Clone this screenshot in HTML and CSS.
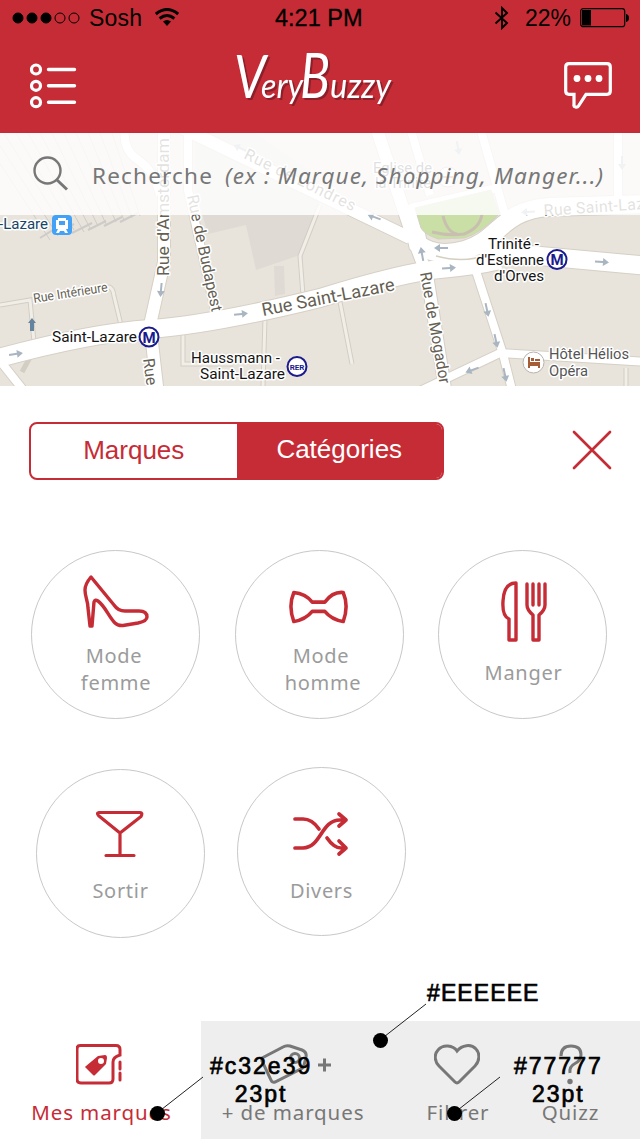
FILE: index.html
```html
<!DOCTYPE html>
<html lang="fr">
<head>
<meta charset="utf-8">
<title>Very Buzzy</title>
<link rel="stylesheet" href="styles.css">
</head>
<body>
<div class="app">
  <header class="header">
    <div class="status">
      <svg class="signal" width="68" height="14" viewBox="0 0 68 14"><g stroke="#000"><circle cx="6" cy="7" r="5"/><circle cx="20" cy="7" r="5"/><circle cx="34" cy="7" r="5"/><circle cx="48" cy="7" r="5" fill="none"/><circle cx="62" cy="7" r="5" fill="none"/></g></svg>
      <span class="carrier">Sosh</span>
      <svg class="wifi" width="24" height="18" viewBox="0 0 24 18"><g fill="none" stroke="#000" stroke-width="3"><path d="M.8 6Q12-3 23.200 6"/><path d="M4.600 10.500Q12 4.500 19.400 10.500"/></g><path d="M8 13.500Q12 10.300 16 13.500L12 18Z"/></svg>
      <span class="time">4:21 PM</span>
      <svg class="bluetooth" width="16" height="24" viewBox="0 0 16 24"><path d="M1.500 6.500 13 17 8 22V2l5 5L1.500 17.500" fill="none" stroke="#000" stroke-width="1.900"/></svg>
      <span class="percent">22%</span>
      <svg class="battery" width="49" height="20" viewBox="0 0 49 20"><rect x=".7" y=".7" width="44" height="18" rx="2.500" fill="none" stroke="#000" stroke-width="1.200"/><path d="M2 2h9v15.500H2zM46 6q3 .5 3 4t-3 4z"/></svg>
    </div>
    <div class="titlebar">
      <svg class="menu-icon" width="47" height="46" viewBox="0 0 47 46" fill="none" stroke="#fff"><g stroke-width="3.200"><circle cx="6" cy="6.500" r="4.500"/><circle cx="6" cy="22.800" r="4.500"/><circle cx="6" cy="39.200" r="4.500"/></g><path d="M18.500 6.500h26M18.500 22.800h26M18.500 39.200h26" stroke-width="3.400" stroke-linecap="round"/></svg>
      <svg class="logo" width="162" height="70" viewBox="0 0 162 70"><g class="logo-text"><text x="2" y="48" font-size="60" textLength="32" lengthAdjust="spacingAndGlyphs">V</text><text x="29" y="48" font-size="35" textLength="42" lengthAdjust="spacingAndGlyphs">ery</text><text x="68" y="48" font-size="62" textLength="30" lengthAdjust="spacingAndGlyphs">B</text><text x="98" y="48" font-size="35" textLength="61" lengthAdjust="spacingAndGlyphs">uzzy</text></g></svg>
      <svg class="chat-icon" width="48" height="47" viewBox="0 0 48 47"><path d="M5 1.700h38q3.300 0 3.300 3.300v24q0 3.300-3.300 3.300H22L14.500 44q-1 1.500-3 1T10 42.500V32.300H5q-3.300 0-3.300-3.300V5Q1.700 1.700 5 1.700Z" fill="none" stroke="#fff" stroke-width="3.200"/><g fill="#fff"><circle cx="13" cy="16.500" r="3.400"/><circle cx="24" cy="16.500" r="3.400"/><circle cx="35" cy="16.500" r="3.400"/></g></svg>
    </div>
  </header>

  <section class="map">
    <svg class="map-canvas" width="640" height="253" viewBox="0 133 640 253">
      <defs>
        <g id="arrow"><path d="M-7-1H1v-3l6 4-6 4V1h-8z" fill="#a9b5c1"/></g>
      </defs>
      <rect y="133" width="640" height="253" fill="#e8e4dc"/>
      <path d="M195 133h60l65 45v22l-20 55-44 15-10-45-38 9-13-44z" fill="#dfdad4"/>
      <path d="M274 266h10l1 28-10 2z" fill="#dfdad4"/>
      <g class="rails"><path d="M-20 133 50 240M-8 133 58 236M4 133 66 232M16 133 74 230M28 133 84 232M40 133 90 228M52 133 98 226M64 133 106 224M76 133 116 222M88 133 124 220M100 133 132 218M112 133 140 216"/><path d="M40 238l16-10M56 233l18-9M72 233l20-10M88 230l18-9M104 226l18-9M120 222l18-9" stroke-width="2"/></g>
      <g class="lane-edge"><path d="M0 305 30 300 34 342M95 291 109 287Q113 288 114 296L121 325M340 302 352 364M320 205 300 256 303 295M183 335v29h50M265 318 263 386M22 372 34 350M626 386V368"/></g>
      <g class="lane"><path d="M0 305 30 300 34 342M95 291 109 287Q113 288 114 296L121 325M340 302 352 364M320 205 300 256 303 295M183 335v29h50M265 318 263 386M626 386V368"/></g>
      <g class="road-edge">
        <path stroke-width="20" d="M-5 359Q90 333 150 329T320 298Q405 272 440 269T500 260"/>
        <path stroke-width="20" d="M410 205 418 244Q435 258 465 250C500 240 500 210 550 207L650 204M480 250 540 256 650 266"/>
        <path stroke-width="14" d="M180 127 410 238M164 125V262L150 325 158 395M376 127 412 235 427 275 446 395"/>
        <path stroke-width="10" d="M188 125V190L216 315M480 127 505 215M618 127V200M410 208 497 188M475 268 503 354 512 390M650 362 500 353 420 391M410 127 430 195M125 127Q122 150 138 160T160 195M-3 357 24 391"/>
      </g>
      <g class="road">
        <path stroke-width="18" d="M-5 359Q90 333 150 329T320 298Q405 272 440 269T500 260"/>
        <path stroke-width="18" d="M410 205 418 244Q435 258 465 250C500 240 500 210 550 207L650 204M480 250 540 256 650 266"/>
        <path stroke-width="12" d="M180 127 410 238M164 125V262L150 325 158 395M376 127 412 235 427 275 446 395"/>
        <path stroke-width="8" d="M188 125V190L216 315M480 127 505 215M618 127V200M410 208 497 188M475 268 503 354 512 390M650 362 500 353 420 391M410 127 430 195M125 127Q122 150 138 160T160 195M-3 357 24 391"/>
      </g>
      <path d="M415 208 491 190 499 214Q480 234 464 238L438 239Q424 234 421 228Z" fill="#c9dfa6" stroke="#d5cfc0"/>
      <path d="M432 232q16 4 32 2 16-6 18-20M443 216q4 16 14 18" fill="none" stroke="#c9bfb0" stroke-width="3"/>
      <path d="M436 256q30 8 52-2" fill="none" stroke="#d5cfc0" stroke-width="1.500"/>
      <use href="#arrow" transform="translate(16 354) rotate(-8)"/>
      <use href="#arrow" transform="translate(161 290) rotate(95)"/>
      <use href="#arrow" transform="translate(241 314) rotate(-6)"/>
      <use href="#arrow" transform="translate(449 268) rotate(-5)"/>
      <use href="#arrow" transform="translate(602 262) rotate(4)"/>
      <use href="#arrow" transform="translate(487 310) rotate(78)"/>
      <use href="#arrow" transform="translate(496 341) rotate(78)"/>
      <use href="#arrow" transform="translate(505 375) rotate(78)"/>
      <use href="#arrow" transform="translate(472 370) rotate(160)"/>
      <use href="#arrow" transform="translate(441 248) rotate(180)"/>
      <use href="#arrow" transform="translate(374 217) rotate(200)"/>
      <use href="#arrow" transform="translate(422 254) rotate(-100)"/>
      <use href="#arrow" transform="translate(240 148) rotate(205)"/>
      <use href="#arrow" transform="translate(528 212) rotate(175)"/>
      <use href="#arrow" transform="translate(458 148) rotate(80)"/>
      <use href="#arrow" transform="translate(622 163) rotate(90)"/>
      <path d="M30 331v-8h-2l4-5 4 5h-2v8z" fill="#65839c"/>
      <g class="street" font-size="16">
        <text transform="translate(169 276) rotate(-90)" textLength="138" lengthAdjust="spacingAndGlyphs" font-size="17">Rue d'Amsterdam</text>
        <text transform="translate(187 196) rotate(78)" textLength="119" lengthAdjust="spacingAndGlyphs">Rue de Budapest</text>
        <text transform="translate(243 158) rotate(26)" textLength="122">Rue de Londres</text>
        <text transform="translate(263 316) rotate(-11)" textLength="135" lengthAdjust="spacingAndGlyphs" font-size="18">Rue Saint-Lazare</text>
        <text transform="translate(420 273) rotate(80)" textLength="113" lengthAdjust="spacingAndGlyphs">Rue de Mogador</text>
        <text transform="translate(143 359) rotate(82)">Rue</text>
        <text transform="translate(34 303) rotate(-9)" textLength="75" lengthAdjust="spacingAndGlyphs" font-size="13">Rue Intérieure</text>
        <text transform="translate(544 216) rotate(-4)" textLength="124" font-size="16">Rue Saint-Lazare</text>
      </g>
      <g class="place" font-size="15.500">
        <text x="-1" y="229" textLength="49" lengthAdjust="spacingAndGlyphs" fill="#174568">-Lazare</text>
        <text x="52" y="342" textLength="85" lengthAdjust="spacingAndGlyphs">Saint-Lazare</text>
        <text x="191" y="363" textLength="89" lengthAdjust="spacingAndGlyphs">Haussmann -</text>
        <text x="200" y="379" textLength="85" lengthAdjust="spacingAndGlyphs">Saint-Lazare</text>
        <text x="488" y="249" textLength="51" lengthAdjust="spacingAndGlyphs">Trinité -</text>
        <text x="476" y="265" textLength="68" lengthAdjust="spacingAndGlyphs">d'Estienne</text>
        <text x="494" y="281" textLength="50" lengthAdjust="spacingAndGlyphs">d'Orves</text>
        <g fill="#555"><text x="549" y="359" textLength="80" lengthAdjust="spacingAndGlyphs">Hôtel Hélios</text><text x="549" y="376" textLength="39" lengthAdjust="spacingAndGlyphs">Opéra</text><text x="373" y="173" textLength="59" lengthAdjust="spacingAndGlyphs">Eglise de</text><text x="375" y="188" textLength="56" lengthAdjust="spacingAndGlyphs">la Trinité</text></g>
      </g>
      <rect x="52" y="215" width="20" height="20" rx="4" fill="#43a2f5"/><path d="M58 218h8v2h2v9h-2l2 4h-3l-1-2h-4l-1 2h-3l2-4h-2v-9h2z" fill="#fff"/><path d="M59 221h6v4h-6z" fill="#43a2f5"/>
      <g class="badge"><circle cx="149" cy="337" r="9.500"/><text x="149" y="342.500" font-size="15">M</text><circle cx="557" cy="259.500" r="9.500"/><text x="557" y="265" font-size="15">M</text><circle cx="297" cy="366.500" r="9.500"/><text x="297" y="369.500" font-size="8">RER</text></g>
      <circle cx="533.500" cy="362.500" r="10.500" fill="#fff" stroke="#b9b4ad"/><path d="M528 357h2v5h10v6h-2v-2h-8v2h-2zM531 358h3v3h-3zM535 359h5v2h-5z" fill="#a55d38"/>
      <circle cx="448" cy="177" r="10" fill="#fff" stroke="#b9b4ad"/><path d="M443 177h10M448 171v11" stroke="#bd7550" stroke-width="2"/>
    </svg>
    <div class="search">
      <svg class="search-icon" width="36" height="36" viewBox="0 0 36 36" fill="none" stroke="#777" stroke-width="2.400"><circle cx="14.500" cy="14.500" r="13"/><path d="M23.500 23.500 34 33.500" stroke-width="3"/></svg>
      <span class="search-label">Recherche</span>
      <span class="search-hint">(ex : Marque, Shopping, Manger...)</span>
    </div>
  </section>

  <div class="filters">
    <div class="segmented"><span class="segment">Marques</span><span class="segment segment-active">Catégories</span></div>
    <svg class="close" width="40" height="40" viewBox="0 0 40 40"><path d="M2 2 38 38M38 2 2 38" stroke="#c62c36" stroke-width="2.700" stroke-linecap="round"/></svg>
  </div>

  <main class="categories">
    <div class="row row-first">
      <div class="category">
        <svg width="66" height="54" viewBox="0 0 66 54"><path d="M8 2Q2 9 2 15c0 7 3 11 3 18l2 18h2l2-24q1-3 4-1C22 31 26 42 32 48q3 3 8 2.500L55 48q9-2 9-6 0-6-8-6H42q-7 0-11-6Z"/></svg>
        <span class="name femme"><span class="word-first">Mode</span><br>femme</span>
      </div>
      <div class="category">
        <svg width="60" height="36" viewBox="0 0 62 36"><path d="M5 3Q-1 17 5 33 17 31 24 22.500H37Q44 31 56 33 62 17 56 3 45 2 37 13H24Q17 4 5 3Z" stroke-width="3.700"/></svg>
        <span class="name homme"><span class="word-first">Mode</span><br>homme</span>
      </div>
      <div class="category category-food">
        <svg width="48" height="62" viewBox="0 0 48 62"><path d="M16 2v57H9V38q-7-3-6-18Q4 2 16 2ZM27 3v21q0 5 6 10v25h6V34q6-5 6-10V3M33 3v21M39 3v21"/></svg>
        <span class="name manger">Manger</span>
      </div>
    </div>
    <div class="row row-second">
      <div class="category category-drink">
        <svg width="48" height="48" viewBox="0 0 48 48"><path d="M3 2.500h41q3 0 1 4L24 23 3 6q-3-3 0-3.500ZM24 23v22M10 45.500h28" stroke-width="3.200"/></svg>
        <span class="name sortir">Sortir</span>
      </div>
      <div class="category category-misc">
        <svg width="56" height="46" viewBox="0 0 56 46"><path d="M2 8h8q9 0 16 10M2 37h8C28 37 28 9 47 9h6M34 27q7 10 14 10h5M46 3l7 6-7 6M46 30l7 7-7 6" stroke-width="3.700"/></svg>
        <span class="name divers">Divers</span>
      </div>
    </div>
  </main>

  <nav class="tabs">
    <div class="tab tab-active">
      <svg width="46" height="42" viewBox="0 0 46 42" fill="none" stroke="#c62c36" stroke-width="3"><path d="M4 1.500h36q4 0 4 4V11q-7 2-7 7v17q0 4-4 4H5q-4 0-4-4V5q0-3.500 3-3.500Z"/><path d="M44 18v7M44 29v7" stroke-linecap="round"/><path fill="#c62c36" stroke="none" fill-rule="evenodd" d="M10 22 22 12l7-1q2 0 2 3l-1 6-11 11q-1 1-2 0l-8-8Zm12-5a3 3 0 1 0 6 0 3 3 0 1 0-6 0"/></svg>
      <span class="tab-name">Mes marques</span>
    </div>
    <div class="tab tab-more">
      <svg width="74" height="42" viewBox="0 0 74 42" fill="none" stroke="#777" stroke-width="3"><path d="m3 14 21-11q3-2 7-1l12 4q5 2 4 7l-2 8q-1 4-5 5L16 38q-3 1-4-2L3 17Z"/><circle cx="36" cy="14" r="4.500"/><path d="M59 21h13M65.500 14.500v13"/></svg>
      <span class="tab-name">+ de marques</span>
    </div>
    <div class="tab tab-filter">
      <svg width="46" height="42" viewBox="0 0 46 42"><path d="M23 7C19 1 9 0 4 6-.5 11 1 18 5 22L21 38q2 2 4 0l16-16c5-5 5-13 1-17C37-.5 28 1 23 7Z" fill="none" stroke="#777" stroke-width="3"/></svg>
      <span class="tab-name">Filtrer</span>
    </div>
    <div class="tab tab-quiz">
      <svg width="26" height="42" viewBox="0 0 26 42"><path d="M3 12Q3 2 13 2q10 0 10 8.500 0 6-6 9T12 29" fill="none" stroke="#777" stroke-width="3"/><circle cx="12" cy="37.500" r="2.700" fill="#777"/></svg>
      <span class="tab-name">Quizz</span>
    </div>
  </nav>

  <div class="annotations">
    <svg class="pointers" width="640" height="169" viewBox="0 970 640 169"><path d="M380 1040 426 1004M157 1113 203 1077M454 1113 500 1077" stroke="#222"/><circle cx="380.500" cy="1040.500" r="7.500"/><circle cx="157.500" cy="1113.500" r="7.500"/><circle cx="454.500" cy="1113.500" r="7.500"/></svg>
    <span class="note note-grey">#EEEEEE</span>
    <span class="note note-red">#c32e39<br>23pt</span>
    <span class="note note-text">#77777<br>23pt</span>
  </div>
</div>
</body>
</html>
```
FILE: styles.css
```css
* { box-sizing: border-box; }
body { margin: 0; background: #fff; }
.app { position: relative; width: 640px; height: 1139px; display: flex; flex-direction: column; overflow: hidden; font-family: "Noto Sans", sans-serif; }
svg { display: block; flex: none; }

.header { height: 133px; background: #c62c36; }
.status { height: 36px; display: flex; align-items: center; padding: 0 11px 0 12px; font: 23px/36px "Liberation Sans", sans-serif; white-space: nowrap; }
.carrier { margin-left: 9px; width: 56px; letter-spacing: .2px; }
.wifi { margin-left: 10px; margin-top: -3px; }
.time { margin-left: 96px; width: 90px; font-size: 23.500px; -webkit-text-stroke: .3px #000; }
.bluetooth { margin-left: 129px; }
.percent { margin-left: 15px; width: 49px; }
.battery { margin-left: 6px; }
.titlebar { height: 97px; display: flex; align-items: flex-start; padding-left: 30px; }
.menu-icon { margin-top: 27px; }
.logo { margin: 14px 0 0 155px; overflow: visible; }
.logo-text { fill: #fff; font-family: Lato, sans-serif; font-style: italic; filter: drop-shadow(2px 2px 0 #8b1f2a); }
.chat-icon { margin: 26px 0 0 170px; }

.map { position: relative; height: 253px; }
.rails { fill: none; stroke: #cdcbc7; stroke-width: 1; }
.lane-edge { fill: none; stroke: #d3cec4; stroke-width: 5; }
.lane { fill: none; stroke: #f1eee8; stroke-width: 3; }
.road-edge { fill: none; stroke: #d6d0c5; }
.road { fill: none; stroke: #fff; }
.street, .place { font-family: Roboto, sans-serif; paint-order: stroke; stroke: #fff; stroke-width: 3px; stroke-linejoin: round; }
.street { fill: #665f54; }
.place { fill: #151515; }
.badge { fill: #fff; stroke: #1b1b8e; stroke-width: 2; }
.badge text { fill: #1b1b8e; stroke: none; text-anchor: middle; font-family: Roboto, sans-serif; font-weight: bold; }
.search { position: absolute; inset: 0 0 auto; height: 82px; display: flex; align-items: center; padding-left: 33px; background: rgba(255, 255, 255, .82); color: #777; font-size: 22.500px; white-space: nowrap; }
.search-icon { margin-top: -1px; }
.search-label { margin: 2px 0 0 23px; width: 133px; letter-spacing: 1.200px; }
.search-hint { margin-top: 2px; font-style: italic; letter-spacing: 1.130px; }

.filters { display: flex; align-items: flex-start; padding: 36px 0 0 29px; height: 164px; }
.segmented { display: flex; width: 415px; height: 58px; border: 2px solid #c62c36; border-radius: 8px; overflow: hidden; font: 26px/52px "Liberation Sans", sans-serif; }
.segment { flex: 1; text-align: center; color: #c62c36; }
.segment-active { background: #c62c36; color: #fff; line-height: 50px; }
.close { margin: 8px 0 0 128px; }

.categories { height: 471px; }
.row { display: flex; }
.row-first { gap: 34.500px; padding-left: 31px; }
.row-second { gap: 32px; padding: 48px 0 0 36px; }
.category { width: 169px; height: 169px; border: 1px solid #c8c8c8; border-radius: 50%; display: flex; flex-direction: column; align-items: center; padding-top: 24px; }
.category svg { fill: none; stroke: #c62c36; stroke-width: 3.400; stroke-linecap: round; stroke-linejoin: round; }
.category:nth-child(2) svg { margin-top: 14px; }
.name { font-size: 20px; line-height: 27px; letter-spacing: .7px; color: #9b9b9b; text-align: center; }
.word-first { margin-right: 4px; }
.femme { margin: 13px 0 0 1px; }
.homme { margin: 17px 0 0 8px; }
.category-food { padding-top: 30px; }
.category-food svg { margin-left: 2px; }
.manger { margin: 16px 0 0 2px; }
.category-drink { margin-top: 2px; padding-top: 40px; }
.category-drink svg { margin-right: 1px; }
.sortir { margin-top: 19px; }
.row-second .category-misc { padding-top: 43px; }
.category.category-misc svg { margin-top: 0; margin-right: 1px; }
.divers { margin-top: 20px; }

.tabs { height: 118px; display: flex; background: #eee; color: #777; }
.tab { display: flex; flex-direction: column; align-items: center; padding-top: 23px; }
.tab-name { margin-top: 12px; font-size: 20.500px; line-height: 28px; letter-spacing: .9px; white-space: nowrap; }
.tab-active { width: 201px; padding-right: 0; background: #fff; color: #c62c36; }
.tab-active svg { margin-right: 3px; }
.tab-active .tab-name { margin-left: 2px; }
.tab-more { width: 184px; }
.tab-more svg { margin-left: 6px; }
.tab-filter { width: 146px; }
.tab-filter svg { margin-right: 3px; }
.tab-quiz { width: 79px; }

.annotations { position: absolute; inset: 970px 0 0; }
.note { position: absolute; font: 23px/28px "Liberation Sans", sans-serif; letter-spacing: 2px; text-align: center; -webkit-text-stroke: .7px #000; white-space: nowrap; }
.note-grey { left: 427px; top: 9px; letter-spacing: 1.100px; }
.note-red { left: 210px; top: 82px; }
.note-text { left: 514px; top: 82px; }
```
